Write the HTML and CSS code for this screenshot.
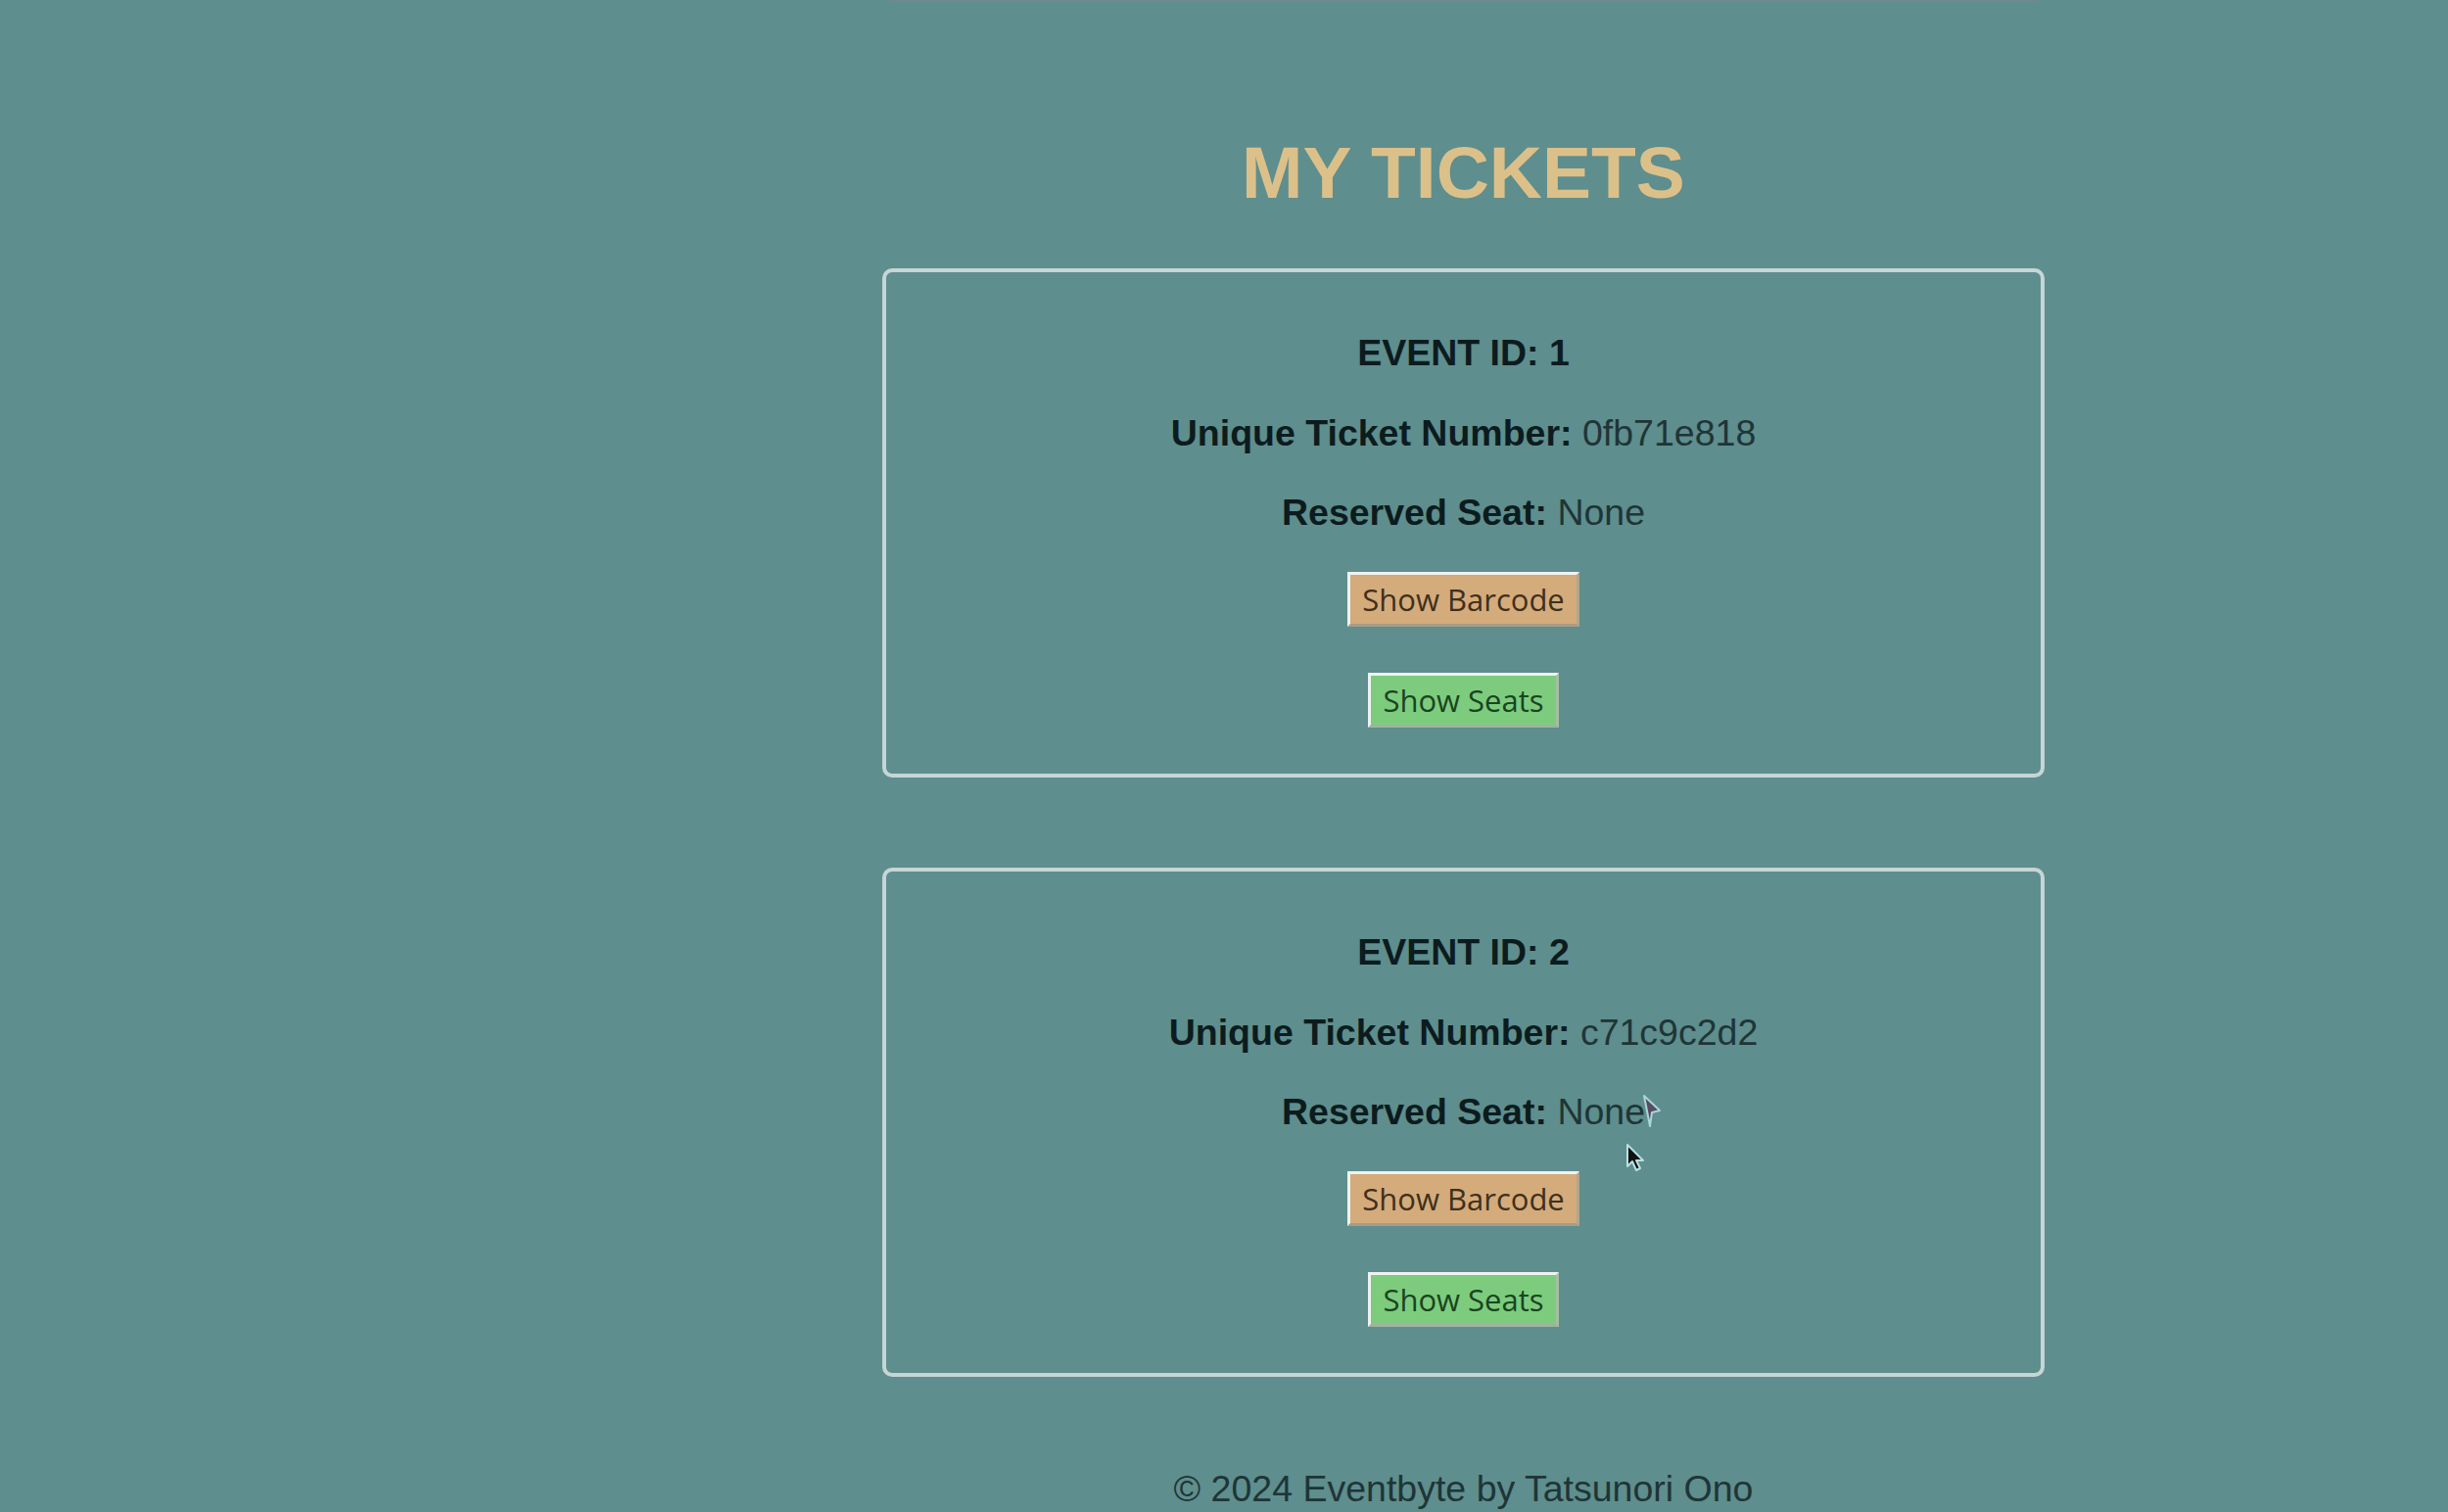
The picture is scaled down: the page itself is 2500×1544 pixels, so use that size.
FILE: index.html
```html
<!DOCTYPE html>
<html lang="en">
<head>
<meta charset="utf-8">
<title>My Tickets - Eventbyte</title>
<link rel="stylesheet" href="styles.css">
</head>
<body>
<div class="layout">
  <aside class="sidebar"></aside>
  <main class="main">
    <div class="topbar"></div>
    <h1 class="title">MY TICKETS</h1>

    <section class="ticket">
      <p class="row event">EVENT ID: 1</p>
      <p class="row"><span class="label">Unique Ticket Number:</span> <span class="value">0fb71e818</span></p>
      <p class="row"><span class="label">Reserved Seat:</span> <span class="value">None</span></p>
      <button class="btn btn-barcode">Show Barcode</button>
      <button class="btn btn-seats">Show Seats</button>
    </section>

    <section class="ticket">
      <p class="row event">EVENT ID: 2</p>
      <p class="row"><span class="label">Unique Ticket Number:</span> <span class="value">c71c9c2d2</span></p>
      <p class="row"><span class="label">Reserved Seat:</span> <span class="value">None</span></p>
      <button class="btn btn-barcode">Show Barcode</button>
      <button class="btn btn-seats">Show Seats</button>
    </section>

    <footer class="footer">© 2024 Eventbyte by Tatsunori Ono</footer>
  </main>

  <svg class="cursor cursor-ghost" width="22" height="36" viewBox="0 0 22 36" aria-hidden="true">
    <path d="M3 2 L19 17 L11 19 L9 33 Z" fill="#5a4a62" stroke="#a9d6d8" stroke-width="2" stroke-linejoin="round"/>
  </svg>
  <svg class="cursor cursor-arrow" width="24" height="32" viewBox="0 0 24 32" aria-hidden="true">
    <path d="M2 2 L2 24 L7 19 L11 28 L15 26 L11 18 L18 18 Z" fill="#111" stroke="#b8e0e2" stroke-width="2" stroke-linejoin="round"/>
  </svg>
</div>
</body>
</html>
```

FILE: styles.css
```css
html, body {
  margin: 0;
  padding: 0;
}

body {
  background: #5e8e8d;
  width: 2500px;
  height: 1544px;
  overflow: hidden;
  font-family: "Liberation Sans", Arial, sans-serif;
}

.layout {
  position: relative;
  display: grid;
  grid-template-columns: 489px 1fr;
  min-height: 1544px;
}

.sidebar {
  background: transparent;
}

.main {
  display: flex;
  flex-direction: column;
  align-items: center;
}

.topbar {
  width: 1172px;
  height: 2px;
  background: #71898c;
}

.title {
  margin: 137px 0 60px 0;
  font-size: 75px;
  line-height: 1;
  font-weight: 700;
  color: #dcc08a;
  letter-spacing: 0;
}

.ticket {
  box-sizing: border-box;
  width: 1187px;
  border: 4px solid #c6d5d6;
  border-radius: 10px;
  padding: 64px 0 47px 0;
  display: flex;
  flex-direction: column;
  align-items: center;
}

.ticket + .ticket {
  margin-top: 92px;
}

.row {
  margin: 0;
  font-size: 37.5px;
  line-height: 1;
  height: 37px;
  color: #1d3335;
}

.row + .row {
  margin-top: 44.5px;
}

.event,
.label {
  font-weight: 700;
  color: #0c1c1e;
}

.value {
  font-weight: 400;
  color: #1f3537;
}

.btn {
  font-family: "Open Sans", "Noto Sans", sans-serif;
  font-size: 31px;
  line-height: 37px;
  padding: 6.5px 12px;
  border-style: solid;
  border-width: 3px;
  border-radius: 0;
  cursor: pointer;
}

.btn-barcode {
  margin-top: 42px;
  background: #d4ab7b;
  color: #3f301c;
  border-color: #eef2f1 #b3a58e #a89c86 #eef2f1;
}

.btn-seats {
  margin-top: 47px;
  background: #7dcc7e;
  color: #1a4420;
  border-color: #eef2f1 #a3bfa4 #9fb3a0 #eef2f1;
}

.footer {
  margin-top: 96px;
  font-size: 37.5px;
  line-height: 1;
  color: #1e3537;
}

.cursor {
  position: absolute;
}

.cursor-ghost {
  left: 1676px;
  top: 1117px;
}

.cursor-arrow {
  left: 1660px;
  top: 1167px;
}
```
